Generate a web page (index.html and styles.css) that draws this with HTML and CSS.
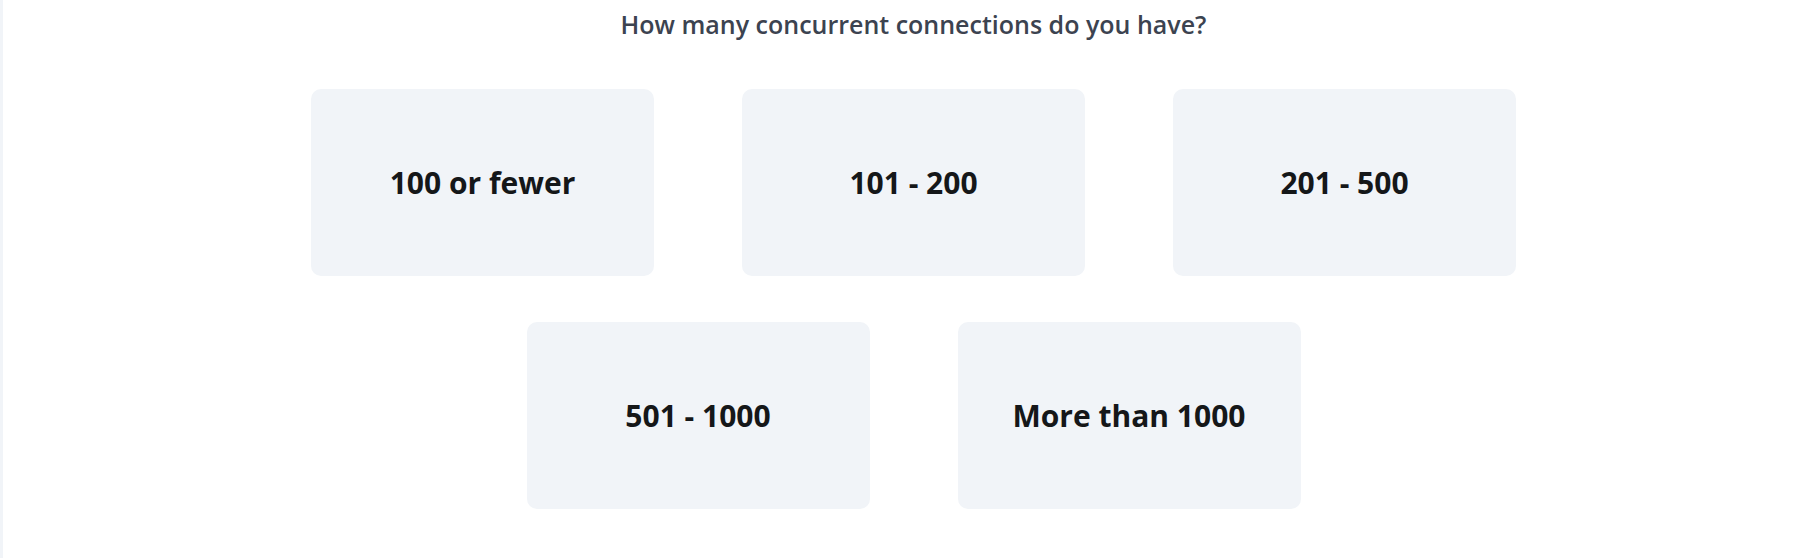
FILE: index.html
```html
<!DOCTYPE html>
<html lang="en">
<head>
<meta charset="utf-8">
<title>Concurrent connections</title>
<link rel="stylesheet" href="styles.css">
</head>
<body>
<div class="page">
  <aside class="strip"></aside>
  <main class="main">
    <h2 class="question">How many concurrent connections do you have?</h2>
    <div class="options">
      <button class="option">100 or fewer</button>
      <button class="option">101 - 200</button>
      <button class="option">201 - 500</button>
      <button class="option">501 - 1000</button>
      <button class="option">More than 1000</button>
    </div>
  </main>
</div>
</body>
</html>
```

FILE: styles.css
```css
html, body {
  margin: 0;
  padding: 0;
  background: #ffffff;
  height: 100%;
}
body {
  font-family: "Open Sans", "Noto Sans", sans-serif;
}
.page {
  display: flex;
  min-height: 558px;
}
.strip {
  width: 3px;
  flex: 0 0 3px;
  background: #f1f4f8;
}
.main {
  flex: 1;
  padding-left: 5px;
  display: flex;
  flex-direction: column;
  align-items: center;
}
.question {
  margin: 7px 0 0;
  font-size: 25px;
  line-height: 34px;
  font-weight: 600;
  color: #3c4350;
}
.options {
  margin-top: 48px;
  width: 1205px;
  display: flex;
  flex-wrap: wrap;
  justify-content: center;
  gap: 46px 88px;
}
.option {
  width: 343px;
  height: 187px;
  border: 0;
  border-radius: 10px;
  background: #f1f4f8;
  font-family: "Open Sans", "Noto Sans", sans-serif;
  font-size: 30px;
  font-weight: 700;
  color: #151719;
  display: flex;
  align-items: center;
  justify-content: center;
  padding: 0;
  cursor: pointer;
}
```
